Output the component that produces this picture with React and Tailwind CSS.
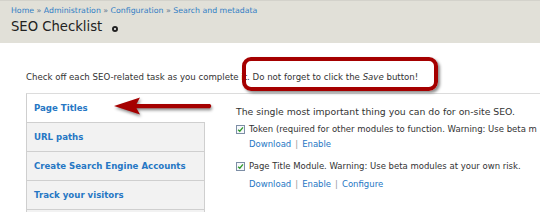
import React from 'react';

const font = { fontFamily: '"DejaVu Sans", Verdana, sans-serif' };

const tabs = [
    { label: 'Page Titles', active: true },
    { label: 'URL paths' },
    { label: 'Create Search Engine Accounts' },
    { label: 'Track your visitors' },
    { label: '' }
];

const Checkbox = () => (
    <span className="flex h-[9px] w-[9px] shrink-0 items-center justify-center border border-[#7d8ea6] bg-[#f6f8fb]">
        <svg viewBox="0 0 8 8" className="h-[7px] w-[7px]">
            <path d="M1.3 4.2 L3.2 6 L6.8 1.6" fill="none" stroke="#2f9a2a" strokeWidth="1.5" />
        </svg>
    </span>
);

const Links = ({ items }) => (
    <div className="flex items-center pl-[13px] text-[8.5px] leading-[11px] text-[#2677c4]">
        {items.map((item, i) => (
            <span key={item} className="flex items-center">
                {i > 0 && <span className="px-[4px] text-[#999]">|</span>}
                {item}
            </span>
        ))}
    </div>
);

const CheckItem = ({ label, links, className = '' }) => (
    <div className={className}>
        <div className="flex h-[11px] items-center gap-[4px] whitespace-nowrap text-[8.5px] leading-[11px] text-[#333]">
            <Checkbox />
            <span>{label}</span>
        </div>
        <Links items={links} />
    </div>
);

const App = () => (
    <div className="relative h-[212px] w-[540px] overflow-hidden bg-white" style={font}>
        <header className="h-[43px] border-t border-[#d3d2cb] bg-[#e1e0d8] px-[11px] pt-[4px]">
            <div className="text-[7.8px] leading-[11px] text-[#2f7dc4]">
                Home <span className="text-[#6b7f95]">»</span> Administration <span className="text-[#6b7f95]">»</span> Configuration <span className="text-[#6b7f95]">»</span> Search and metadata
            </div>
            <h1 className="mt-[3px] flex items-center text-[13.2px] leading-[16px] text-[#222]">
                SEO Checklist
                <span className="ml-[10px] mt-[3px] h-[6px] w-[6px] rounded-full border-2 border-[#222] bg-white"></span>
            </h1>
        </header>

        <main className="pt-[28px]">
            <p className="ml-[26px] whitespace-nowrap text-[8.6px] leading-[12px] text-[#333]">
                Check off each SEO-related task as you complete it. Do not forget to click the <em>Save</em> button!
            </p>

            <div className="ml-[26px] mt-[10px] flex border-l border-t border-l-[#cfcfcf] border-t-[#dcdcdc]">
                <ul className="w-[178px] shrink-0">
                    {tabs.map((tab, i) => (
                        <li
                            key={i}
                            className={`flex h-[29px] items-center border-b border-[#cfcfcf] pl-[7px] text-[8.6px] font-bold text-[#2677c4] ${tab.active ? 'bg-white' : 'border-r bg-[#f2f2f2]'}`}
                        >
                            {tab.label}
                        </li>
                    ))}
                </ul>
                <div className="flex-1 pl-[31px] pt-[12px]">
                    <p className="whitespace-nowrap text-[9.3px] leading-[12px] text-[#333]">
                        The single most important thing you can do for on-site SEO.
                    </p>
                    <CheckItem
                        className="mt-[6px] [&>div:last-child]:mt-[4px]"
                        label="Token (required for other modules to function. Warning: Use beta m"
                        links={['Download', 'Enable']}
                    />
                    <CheckItem
                        className="mt-[11px] [&>div:last-child]:mt-[7px]"
                        label="Page Title Module. Warning: Use beta modules at your own risk."
                        links={['Download', 'Enable', 'Configure']}
                    />
                </div>
            </div>
        </main>

        {/* callout box */}
        <div className="absolute left-[242px] top-[57px] h-[34px] w-[196px] rounded-[9px] border-4 border-[#a50000] shadow-[2px_2px_3px_rgba(0,0,0,0.45)]"></div>

        {/* arrow */}
        <svg
            className="absolute left-0 top-0 h-[212px] w-[540px]"
            viewBox="0 0 540 212"
            style={{ filter: 'drop-shadow(1px 2px 1.5px rgba(0,0,0,0.45))' }}
        >
            <path
                d="M114 106 L140 97.5 L136.5 104 L210 104 Q212.5 106 210 108.2 L136.5 108.2 L140 114.5 Z"
                fill="#a50000"
            />
        </svg>
    </div>
);

export default App;
